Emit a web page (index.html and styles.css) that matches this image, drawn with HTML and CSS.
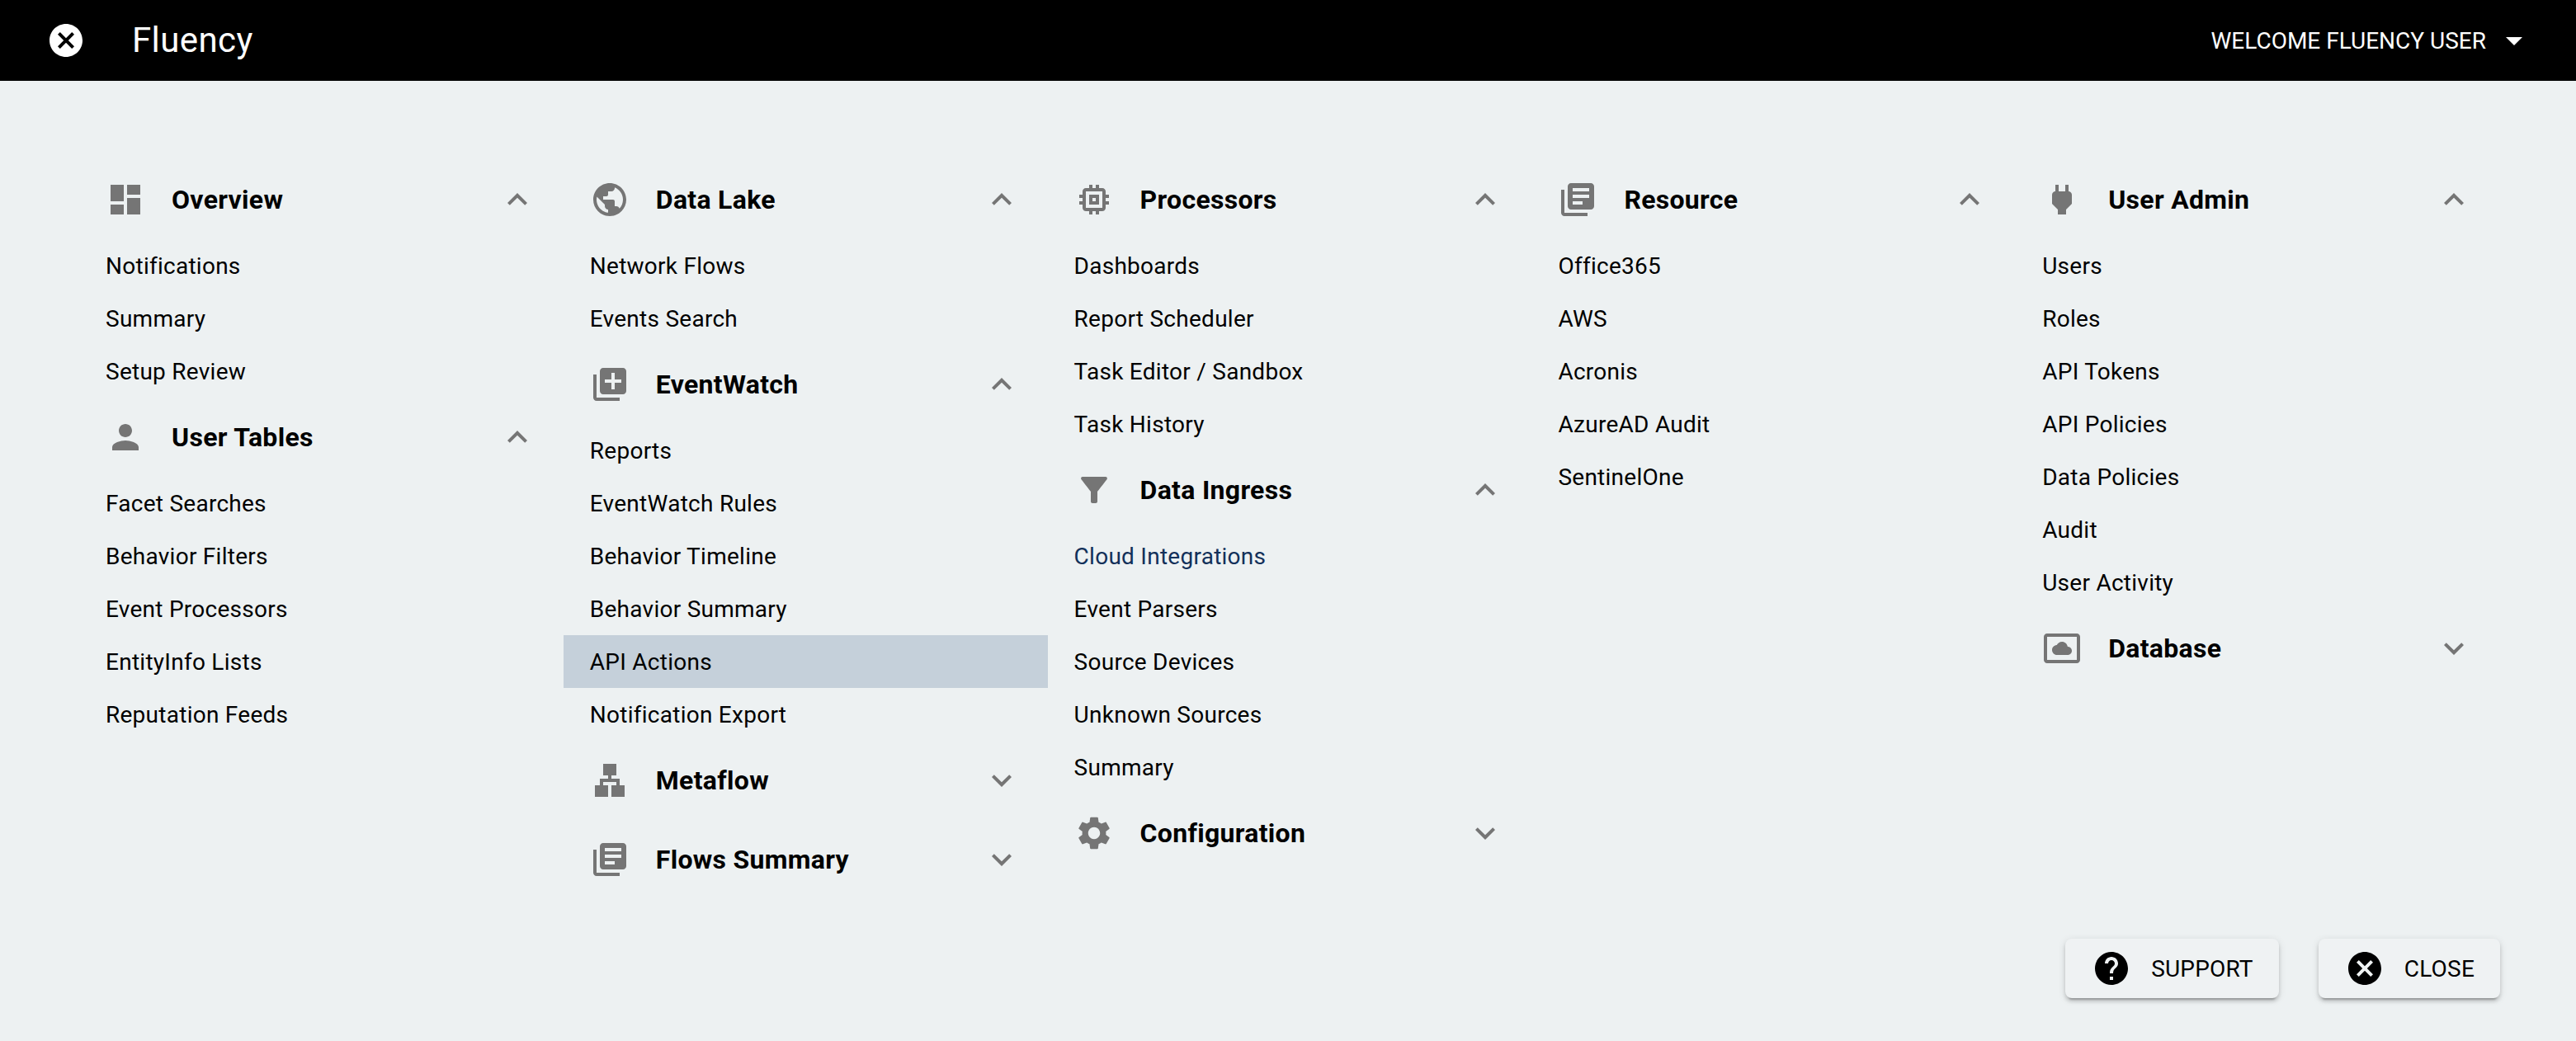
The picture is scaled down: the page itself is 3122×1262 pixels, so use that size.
FILE: index.html
```html
<!DOCTYPE html>
<html lang="en">
<head>
<meta charset="utf-8">
<title>Fluency</title>
<link rel="stylesheet" href="styles.css">
</head>
<body>
<svg class="defs" aria-hidden="true">
  <symbol id="i-dashboard" viewBox="0 0 24 24"><path d="M3 13h8V3H3v10zm0 8h8v-6H3v6zm10 0h8V11h-8v10zm0-18v6h8V3h-8z"/></symbol>
  <symbol id="i-public" viewBox="0 0 24 24"><path d="M12 2C6.48 2 2 6.48 2 12s4.48 10 10 10 10-4.48 10-10S17.52 2 12 2zm-1 17.93c-3.95-.49-7-3.85-7-7.93 0-.62.08-1.21.21-1.79L9 15v1c0 1.1.9 2 2 2v1.93zm6.9-2.54c-.26-.81-1-1.39-1.9-1.39h-1v-3c0-.55-.45-1-1-1H8v-2h2c.55 0 1-.45 1-1V7h2c1.1 0 2-.9 2-2v-.41c2.93 1.19 5 4.06 5 7.41 0 2.08-.8 3.97-2.1 5.39z"/></symbol>
  <symbol id="i-library-add" viewBox="0 0 24 24"><path d="M4 6H2v14c0 1.1.9 2 2 2h14v-2H4V6zm16-4H8c-1.1 0-2 .9-2 2v12c0 1.1.9 2 2 2h12c1.1 0 2-.9 2-2V4c0-1.1-.9-2-2-2zm-1 9h-4v4h-2v-4H9V9h4V5h2v4h4v2z"/></symbol>
  <symbol id="i-person" viewBox="0 0 24 24"><path d="M12 12c2.21 0 4-1.79 4-4s-1.79-4-4-4-4 1.79-4 4 1.79 4 4 4zm0 2c-2.67 0-8 1.34-8 4v2h16v-2c0-2.66-5.33-4-8-4z"/></symbol>
  <symbol id="i-memory" viewBox="0 0 24 24"><path d="M15 9H9v6h6V9zm-2 4h-2v-2h2v2zm8-2V9h-2V7c0-1.1-.9-2-2-2h-2V3h-2v2h-2V3H9v2H7c-1.1 0-2 .9-2 2v2H3v2h2v2H3v2h2v2c0 1.1.9 2 2 2h2v2h2v-2h2v2h2v-2h2c1.1 0 2-.9 2-2v-2h2v-2h-2v-2h2zm-4 6H7V7h10v10z"/></symbol>
  <symbol id="i-filter" viewBox="0 0 24 24"><path d="M4.25 5.61C6.27 8.2 10 13 10 13v6c0 .55.45 1 1 1h2c.55 0 1-.45 1-1v-6s3.72-4.8 5.74-7.39c.51-.66.04-1.61-.79-1.61H5.04c-.83 0-1.3.95-.79 1.61z"/></symbol>
  <symbol id="i-settings" viewBox="0 0 24 24"><path d="M19.14 12.94c.04-.3.06-.61.06-.94 0-.32-.02-.64-.07-.94l2.03-1.58c.18-.14.23-.41.12-.61l-1.92-3.32c-.12-.22-.37-.29-.59-.22l-2.39.96c-.5-.38-1.03-.7-1.62-.94l-.36-2.54c-.04-.24-.24-.41-.48-.41h-3.84c-.24 0-.43.17-.47.41l-.36 2.54c-.59.24-1.13.57-1.62.94l-2.39-.96c-.22-.08-.47 0-.59.22L2.74 8.87c-.12.21-.08.47.12.61l2.03 1.58c-.05.3-.09.63-.09.94s.02.64.07.94l-2.03 1.58c-.18.14-.23.41-.12.61l1.92 3.32c.12.22.37.29.59.22l2.39-.96c.5.38 1.03.7 1.62.94l.36 2.54c.05.24.24.41.48.41h3.84c.24 0 .44-.17.47-.41l.36-2.54c.59-.24 1.13-.56 1.62-.94l2.39.96c.22.08.47 0 .59-.22l1.92-3.32c.12-.22.07-.47-.12-.61l-2.01-1.58zM12 15.6c-1.98 0-3.6-1.62-3.6-3.6s1.62-3.6 3.6-3.6 3.6 1.62 3.6 3.6-1.62 3.6-3.6 3.6z"/></symbol>
  <symbol id="i-books" viewBox="0 0 24 24"><path d="M4 6H2v14c0 1.1.9 2 2 2h14v-2H4V6zm16-4H8c-1.1 0-2 .9-2 2v12c0 1.1.9 2 2 2h12c1.1 0 2-.9 2-2V4c0-1.1-.9-2-2-2zm-1 9H9V9h10v2zm-4 4H9v-2h6v2zm4-8H9V5h10v2z"/></symbol>
  <symbol id="i-power" viewBox="0 0 24 24"><path d="M16.01 7L16 3h-2v4h-4V3H8v4h-.01C7 6.99 6 7.99 6 8.99v5.49L9.5 18v3h5v-3l3.5-3.51v-5.5c0-1-1-2-1.99-1.99z"/></symbol>
  <symbol id="i-daydream" viewBox="0 0 24 24"><path d="M9 16h6.5c1.38 0 2.5-1.12 2.5-2.5S16.88 11 15.5 11h-.05c-.24-1.69-1.69-3-3.45-3-1.4 0-2.6.83-3.16 2.02h-.16C7.17 10.18 6 11.45 6 13c0 1.66 1.34 3 3 3zM21 3H3c-1.1 0-2 .9-2 2v14c0 1.1.9 2 2 2h18c1.1 0 2-.9 2-2V5c0-1.1-.9-2-2-2zm0 16.01H3V4.99h18v14.02z"/></symbol>
  <symbol id="i-lan" viewBox="0 0 24 24"><path d="M13 22h8v-7h-3v-4h-5V9h3V2H8v7h3v2H6v4H3v7h8v-7H8v-2h8v2h-3z"/></symbol>
  <symbol id="i-help" viewBox="0 0 24 24"><path d="M12 2C6.48 2 2 6.48 2 12s4.48 10 10 10 10-4.48 10-10S17.52 2 12 2zm1 17h-2v-2h2v2zm2.07-7.75l-.9.92C13.45 12.9 13 13.5 13 15h-2v-.5c0-1.1.45-2.1 1.17-2.83l1.24-1.26c.37-.36.59-.86.59-1.41 0-1.1-.9-2-2-2s-2 .9-2 2H8c0-2.21 1.79-4 4-4s4 1.79 4 4c0 .88-.36 1.68-.93 2.25z"/></symbol>
  <symbol id="i-cancel" viewBox="0 0 24 24"><path d="M12 2C6.47 2 2 6.47 2 12s4.47 10 10 10 10-4.47 10-10S17.53 2 12 2zm5 13.59L15.59 17 12 13.41 8.41 17 7 15.59 10.59 12 7 8.41 8.41 7 12 10.59 15.59 7 17 8.41 13.41 12 17 15.59z"/></symbol>
  <symbol id="i-less" viewBox="0 0 24 24"><path d="M12 8l-6 6 1.41 1.41L12 10.83l4.59 4.58L18 14z"/></symbol>
  <symbol id="i-more" viewBox="0 0 24 24"><path d="M16.59 8.59L12 13.17 7.41 8.59 6 10l6 6 6-6z"/></symbol>
  <symbol id="i-caret" viewBox="0 0 24 24"><path d="M7 10l5 5 5-5z"/></symbol>
</svg>

<header class="topbar">
  <svg class="icon topbar-close"><use href="#i-cancel"/></svg>
  <span class="brand">Fluency</span>
  <span class="welcome">WELCOME FLUENCY USER</span>
  <svg class="icon topbar-caret"><use href="#i-caret"/></svg>
</header>

<main class="menu">
  <div class="column">
    <div class="section-head"><svg class="icon glyph"><use href="#i-dashboard"/></svg><span class="section-title">Overview</span><svg class="icon chevron"><use href="#i-less"/></svg></div>
    <a class="item">Notifications</a>
    <a class="item">Summary</a>
    <a class="item">Setup Review</a>
    <div class="section-head"><svg class="icon glyph"><use href="#i-person"/></svg><span class="section-title">User Tables</span><svg class="icon chevron"><use href="#i-less"/></svg></div>
    <a class="item">Facet Searches</a>
    <a class="item">Behavior Filters</a>
    <a class="item">Event Processors</a>
    <a class="item">EntityInfo Lists</a>
    <a class="item">Reputation Feeds</a>
  </div>
  <div class="column">
    <div class="section-head"><svg class="icon glyph"><use href="#i-public"/></svg><span class="section-title">Data Lake</span><svg class="icon chevron"><use href="#i-less"/></svg></div>
    <a class="item">Network Flows</a>
    <a class="item">Events Search</a>
    <div class="section-head"><svg class="icon glyph"><use href="#i-library-add"/></svg><span class="section-title">EventWatch</span><svg class="icon chevron"><use href="#i-less"/></svg></div>
    <a class="item">Reports</a>
    <a class="item">EventWatch Rules</a>
    <a class="item">Behavior Timeline</a>
    <a class="item">Behavior Summary</a>
    <a class="item item-hover">API Actions</a>
    <a class="item">Notification Export</a>
    <div class="section-head"><svg class="icon glyph"><use href="#i-lan"/></svg><span class="section-title">Metaflow</span><svg class="icon chevron"><use href="#i-more"/></svg></div>
    <div class="section-head"><svg class="icon glyph"><use href="#i-books"/></svg><span class="section-title">Flows Summary</span><svg class="icon chevron"><use href="#i-more"/></svg></div>
  </div>
  <div class="column">
    <div class="section-head"><svg class="icon glyph"><use href="#i-memory"/></svg><span class="section-title">Processors</span><svg class="icon chevron"><use href="#i-less"/></svg></div>
    <a class="item">Dashboards</a>
    <a class="item">Report Scheduler</a>
    <a class="item">Task Editor / Sandbox</a>
    <a class="item">Task History</a>
    <div class="section-head"><svg class="icon glyph"><use href="#i-filter"/></svg><span class="section-title">Data Ingress</span><svg class="icon chevron"><use href="#i-less"/></svg></div>
    <a class="item item-active">Cloud Integrations</a>
    <a class="item">Event Parsers</a>
    <a class="item">Source Devices</a>
    <a class="item">Unknown Sources</a>
    <a class="item">Summary</a>
    <div class="section-head"><svg class="icon glyph"><use href="#i-settings"/></svg><span class="section-title">Configuration</span><svg class="icon chevron"><use href="#i-more"/></svg></div>
  </div>
  <div class="column">
    <div class="section-head"><svg class="icon glyph"><use href="#i-books"/></svg><span class="section-title">Resource</span><svg class="icon chevron"><use href="#i-less"/></svg></div>
    <a class="item">Office365</a>
    <a class="item">AWS</a>
    <a class="item">Acronis</a>
    <a class="item">AzureAD Audit</a>
    <a class="item">SentinelOne</a>
  </div>
  <div class="column">
    <div class="section-head"><svg class="icon glyph"><use href="#i-power"/></svg><span class="section-title">User Admin</span><svg class="icon chevron"><use href="#i-less"/></svg></div>
    <a class="item">Users</a>
    <a class="item">Roles</a>
    <a class="item">API Tokens</a>
    <a class="item">API Policies</a>
    <a class="item">Data Policies</a>
    <a class="item">Audit</a>
    <a class="item">User Activity</a>
    <div class="section-head"><svg class="icon glyph"><use href="#i-daydream"/></svg><span class="section-title">Database</span><svg class="icon chevron"><use href="#i-more"/></svg></div>
  </div>
</main>

<footer class="actions">
  <button class="action" type="button"><svg class="icon action-icon"><use href="#i-help"/></svg><span>SUPPORT</span></button>
  <button class="action" type="button"><svg class="icon action-icon"><use href="#i-cancel"/></svg><span>CLOSE</span></button>
</footer>
</body>
</html>
```

FILE: styles.css
```css
* { box-sizing: border-box; }

html, body { height: 100%; }

body {
  margin: 0;
  height: 100vh;
  display: flex;
  flex-direction: column;
  overflow: hidden;
  background: #edf1f2;
  color: #000;
  font-family: Roboto, "Liberation Sans", sans-serif;
}

.defs { display: none; }

.icon {
  display: block;
  flex: none;
  width: 48px;
  height: 48px;
  fill: currentColor;
}

.topbar {
  flex: none;
  height: 98px;
  display: flex;
  align-items: center;
  padding: 0 51px 0 56px;
  background: #000;
  color: #fff;
}

.brand {
  margin-left: 56px;
  font-size: 42px;
  font-weight: 400;
  letter-spacing: .4px;
  line-height: 1;
}

.welcome {
  margin-left: auto;
  font-size: 28px;
  font-weight: 400;
}

.topbar-caret { margin-left: 10px; }

.menu {
  flex: 1;
  display: grid;
  grid-template-columns: repeat(5, 1fr);
  align-content: start;
  padding: 96px 92px 0 96px;
}

.column {
  display: flex;
  flex-direction: column;
}

.section-head {
  height: 96px;
  display: flex;
  align-items: center;
  padding: 0 32px;
  color: #757575;
}

.section-title {
  flex: 1;
  margin-left: 32px;
  color: #000;
  font-size: 32px;
  font-weight: 700;
  letter-spacing: .3px;
}

.item {
  height: 64px;
  display: flex;
  align-items: center;
  padding: 0 32px;
  font-size: 28px;
  font-weight: 400;
  letter-spacing: .26px;
}

.item-hover { background: #c5d0da; }

.item-active { color: #12305a; }

.actions {
  flex: none;
  display: flex;
  justify-content: flex-end;
  gap: 48px;
  padding: 0 92px 52px 0;
}

.action {
  height: 72px;
  display: flex;
  align-items: center;
  gap: 24px;
  padding: 0 31px 0 32px;
  border: 0;
  border-radius: 8px;
  background: #eff2f3;
  color: #000;
  font-family: inherit;
  font-size: 28px;
  font-weight: 400;
  letter-spacing: .2px;
  box-shadow: 0 6px 2px -4px rgba(0, 0, 0, .2), 0 4px 4px 0 rgba(0, 0, 0, .14), 0 2px 10px 0 rgba(0, 0, 0, .12);
}
```
